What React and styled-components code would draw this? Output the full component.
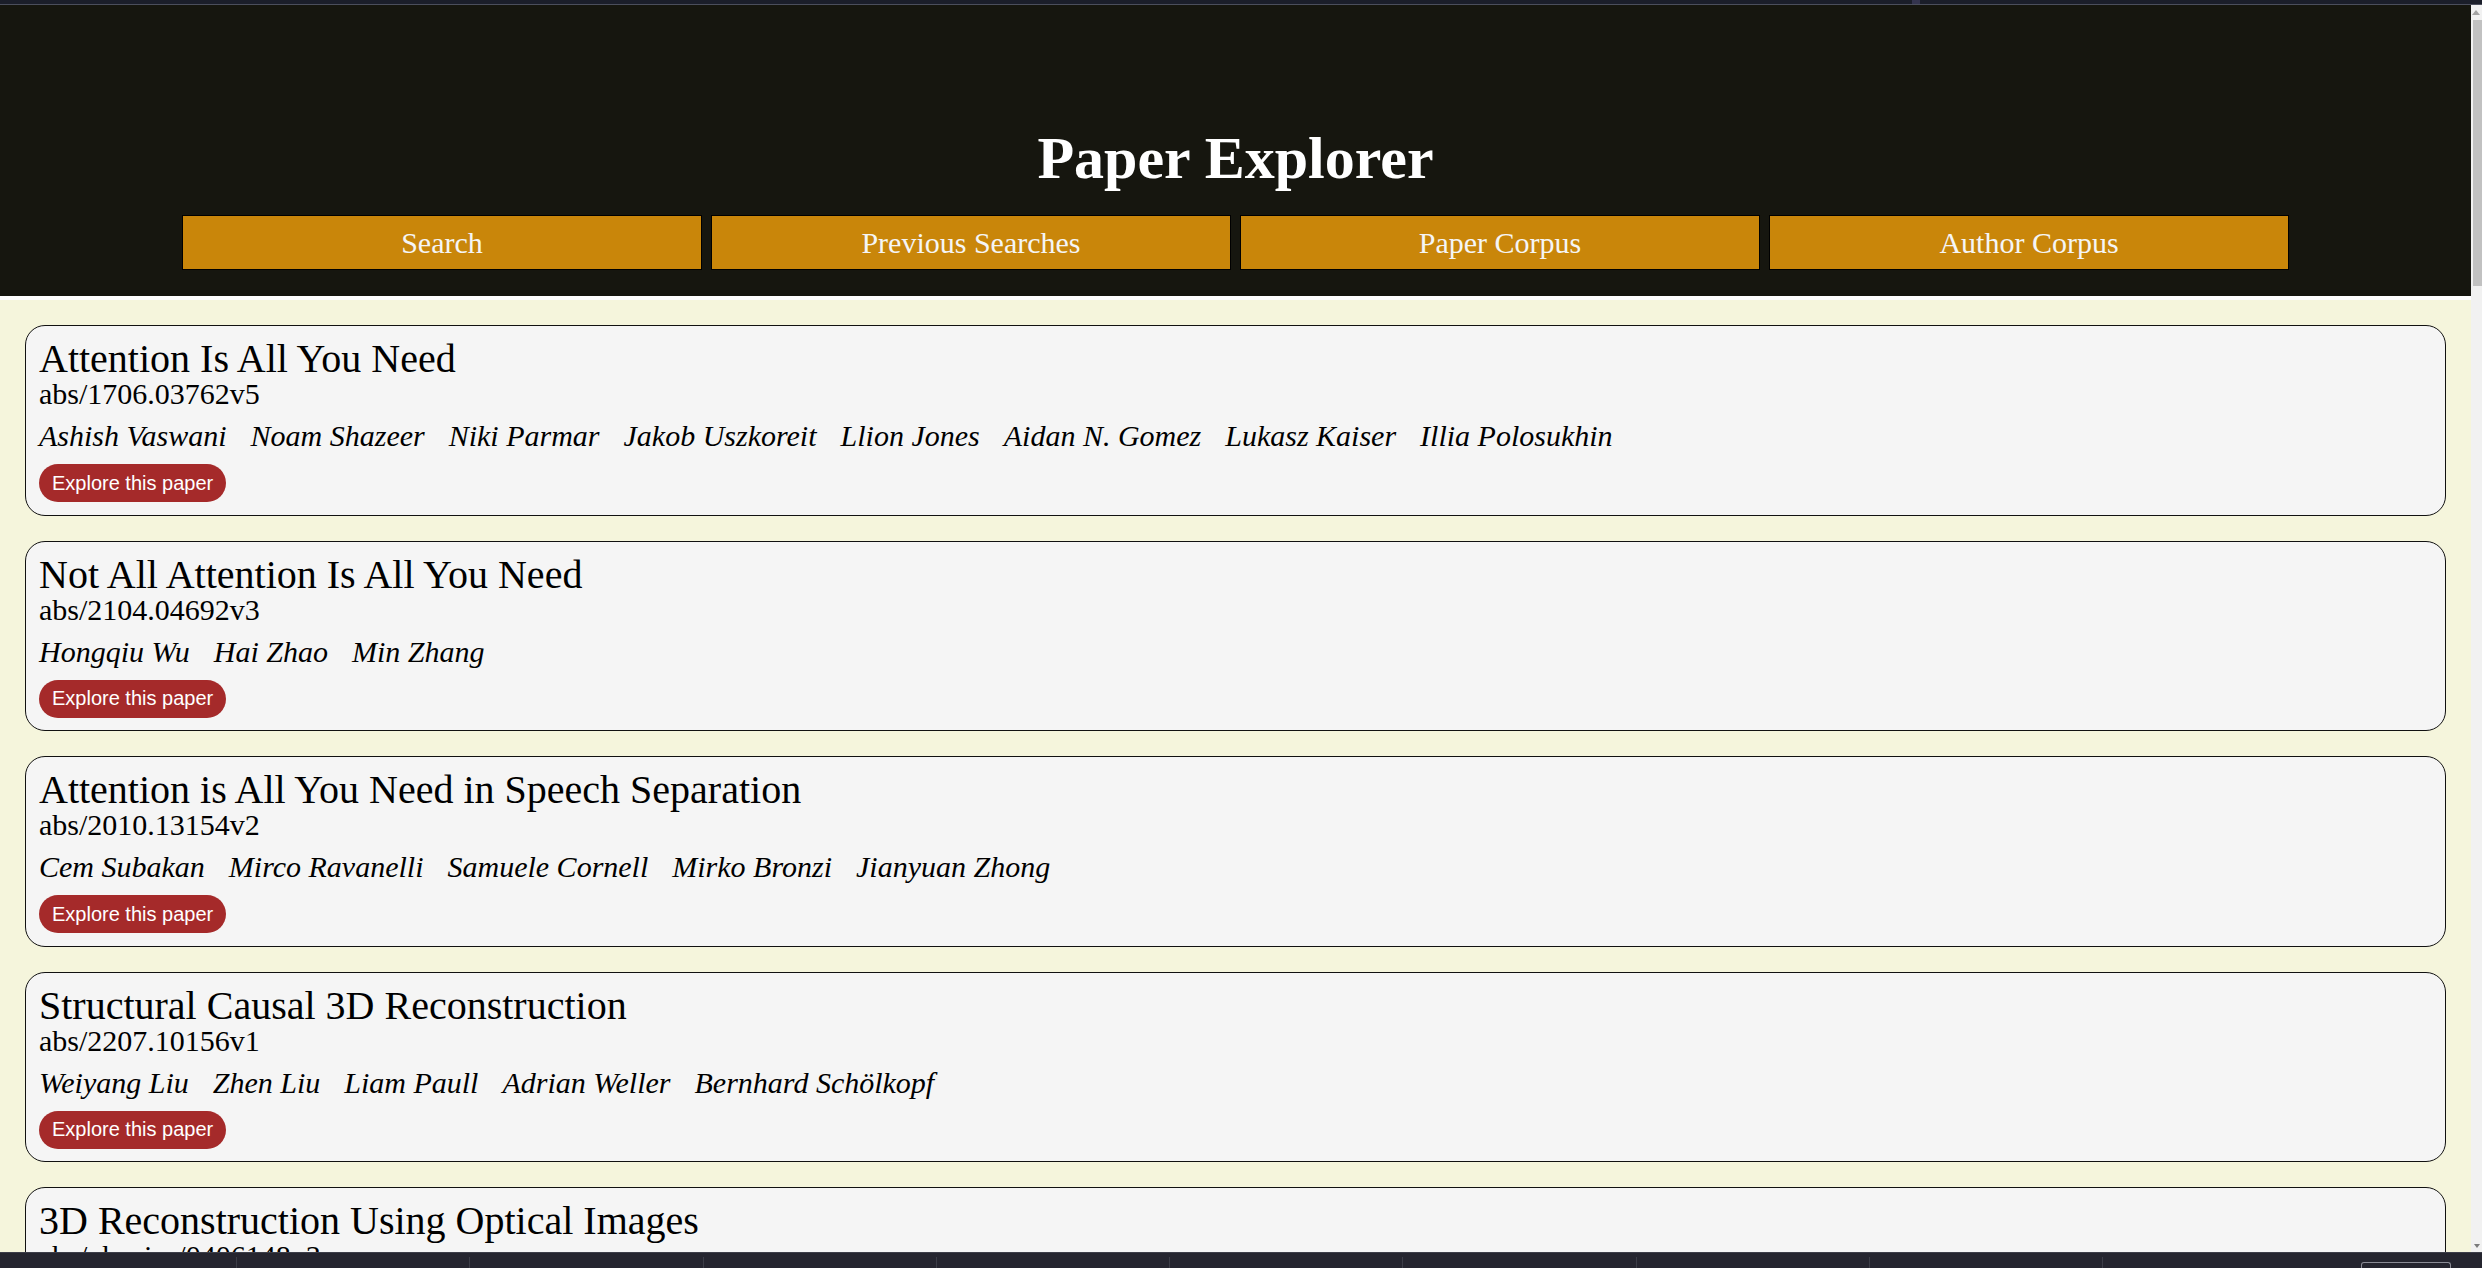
import styled, { createGlobalStyle } from "styled-components";

const GlobalStyle = createGlobalStyle`
  html, body {
    margin: 0;
    padding: 0;
    height: 100%;
    overflow: hidden;
  }
  * {
    box-sizing: border-box;
  }
`;

const papers = [
  {
    id: 1,
    title: "Attention Is All You Need",
    link: "abs/1706.03762v5",
    authors: [
      "Ashish Vaswani",
      "Noam Shazeer",
      "Niki Parmar",
      "Jakob Uszkoreit",
      "Llion Jones",
      "Aidan N. Gomez",
      "Lukasz Kaiser",
      "Illia Polosukhin",
    ],
  },
  {
    id: 2,
    title: "Not All Attention Is All You Need",
    link: "abs/2104.04692v3",
    authors: ["Hongqiu Wu", "Hai Zhao", "Min Zhang"],
  },
  {
    id: 3,
    title: "Attention is All You Need in Speech Separation",
    link: "abs/2010.13154v2",
    authors: [
      "Cem Subakan",
      "Mirco Ravanelli",
      "Samuele Cornell",
      "Mirko Bronzi",
      "Jianyuan Zhong",
    ],
  },
  {
    id: 4,
    title: "Structural Causal 3D Reconstruction",
    link: "abs/2207.10156v1",
    authors: [
      "Weiyang Liu",
      "Zhen Liu",
      "Liam Paull",
      "Adrian Weller",
      "Bernhard Schölkopf",
    ],
  },
  {
    id: 5,
    title: "3D Reconstruction Using Optical Images",
    link: "abs/physics/0406148v3",
    authors: [],
  },
];

const navItems = ["Search", "Previous Searches", "Paper Corpus", "Author Corpus"];

// browser / os chrome around the page
const Screen = styled.div`
  height: 100vh;
  display: flex;
  flex-direction: column;
  overflow: hidden;
  background: #16160f;
`;

const TopBar = styled.div`
  height: 5px;
  flex-shrink: 0;
  display: flex;
  background: #1b1e2a;
  border-bottom: 1px solid #4b4e5c;
`;

const TabMark = styled.div`
  width: 8px;
  margin-left: 1912px;
  background: #34344e;
`;

const Viewport = styled.div`
  flex: 1;
  min-height: 0;
  display: flex;
`;

const Page = styled.div`
  flex: 1;
  min-width: 0;
  overflow: hidden;
`;

const Scrollbar = styled.div`
  width: 11px;
  flex-shrink: 0;
  background: #f1f1f1;
  display: flex;
  flex-direction: column;
  align-items: flex-end;
`;

const ArrowUp = styled.div`
  margin: 5px 2px 0 0;
  width: 0;
  height: 0;
  border-left: 4px solid transparent;
  border-right: 4px solid transparent;
  border-bottom: 5px solid #a3a3a3;
`;

const Thumb = styled.div`
  margin-top: 5px;
  width: 9px;
  height: 266px;
  background: #c1c1c1;
`;

const ArrowDown = styled.div`
  margin: auto 2px 4px 0;
  width: 0;
  height: 0;
  border-left: 3px solid transparent;
  border-right: 3px solid transparent;
  border-top: 4px solid #7a7a7a;
`;

const Taskbar = styled.div`
  height: 16px;
  flex-shrink: 0;
  background: #25252f;
  border-top: 1px solid #3d3e49;
  display: flex;
  align-items: flex-end;
  padding-left: 236px;
`;

const TaskSlot = styled.div`
  width: 233.3px;
  height: 11px;
  border-left: 1px solid #3c3d47;
  flex-shrink: 0;
`;

const TaskBox = styled.div`
  width: 90px;
  height: 6px;
  margin-left: 25px;
  border: 1px solid #8b8c96;
  border-bottom: none;
  border-radius: 3px 3px 0 0;
`;

// page
const Header = styled.header`
  background: #16160f;
  padding: 120px 0 26px;
  border-bottom: 4px solid #ffffff;
  text-align: center;
`;

const Title = styled.h1`
  margin: 0 0 24px;
  font-family: "Liberation Serif", "Times New Roman", serif;
  font-size: 60px;
  line-height: 66px;
  font-weight: bold;
  color: #ffffff;
`;

const Nav = styled.nav`
  display: flex;
  justify-content: center;
  gap: 9px;
`;

const NavButton = styled.button`
  width: 520px;
  height: 55px;
  border: 1px solid #000;
  background: #c9860a;
  color: #f5f5f5;
  font-family: "Liberation Serif", "Times New Roman", serif;
  font-size: 30px;
  padding: 0;
  cursor: pointer;
`;

const Content = styled.main`
  background: #f5f5dc;
  padding: 25px;
  display: flex;
  flex-direction: column;
  gap: 25px;
`;

const Card = styled.article`
  background: #f5f5f5;
  border: 1px solid #111;
  border-radius: 20px;
  padding: 14px 13px 12.5px;
  font-family: "Liberation Serif", "Times New Roman", serif;
  color: #000;
`;

const CardTitle = styled.div`
  font-size: 40px;
  line-height: 38px;
`;

const CardLink = styled.div`
  font-size: 30px;
  line-height: 32px;
`;

const Authors = styled.div`
  margin-top: 10px;
  display: flex;
  gap: 24px;
  font-size: 30px;
  line-height: 32px;
  font-style: italic;
  min-height: 32px;
`;

const ExploreButton = styled.button`
  margin-top: 12px;
  height: 38px;
  padding: 0 13px;
  border: none;
  border-radius: 19px;
  background: #a52a2a;
  color: #ffffff;
  font-family: "Liberation Sans", Arial, sans-serif;
  font-size: 20px;
  cursor: pointer;
`;

function PaperCard({ paper }) {
  return (
    <Card>
      <CardTitle>{paper.title}</CardTitle>
      <CardLink>{paper.link}</CardLink>
      <Authors>
        {paper.authors.map((a) => (
          <span key={a}>{a}</span>
        ))}
      </Authors>
      <ExploreButton>Explore this paper</ExploreButton>
    </Card>
  );
}

export default function App() {
  return (
    <Screen>
      <GlobalStyle />
      <TopBar>
        <TabMark />
      </TopBar>
      <Viewport>
        <Page>
          <Header>
            <Title>Paper Explorer</Title>
            <Nav>
              {navItems.map((item) => (
                <NavButton key={item}>{item}</NavButton>
              ))}
            </Nav>
          </Header>
          <Content>
            {papers.map((p) => (
              <PaperCard key={p.id} paper={p} />
            ))}
          </Content>
        </Page>
        <Scrollbar>
          <ArrowUp />
          <Thumb />
          <ArrowDown />
        </Scrollbar>
      </Viewport>
      <Taskbar>
        {Array.from({ length: 9 }).map((_, i) => (
          <TaskSlot key={i} />
        ))}
        <TaskBox />
      </Taskbar>
    </Screen>
  );
}
